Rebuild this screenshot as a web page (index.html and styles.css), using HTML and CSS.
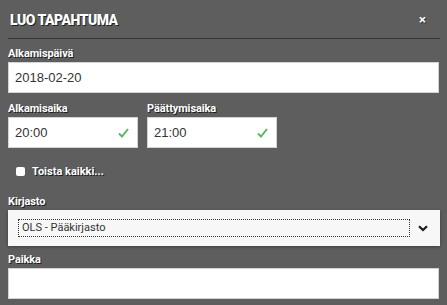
FILE: index.html
```html
<!DOCTYPE html>
<html lang="fi">
<head>
<meta charset="utf-8">
<title>Luo tapahtuma</title>
<link rel="stylesheet" href="styles.css">
</head>
<body>
<div class="dialog">
  <header class="dialog-header">
    <h1 class="dialog-title">LUO TAPAHTUMA</h1>
    <span class="close">&#215;</span>
  </header>

  <div class="field field-first">
    <label class="label">Alkamispäivä</label>
    <div class="input"><span class="value">2018-02-20</span></div>
  </div>

  <div class="row">
    <div class="field field-time">
      <label class="label">Alkamisaika</label>
      <div class="input input-time">
        <span class="value">20:00</span>
        <svg class="check" width="11" height="10" viewBox="0 0 11 10"><path d="M1 5.5 L4 8.5 L10 1" fill="none" stroke="#5cb85c" stroke-width="2"/></svg>
      </div>
    </div>
    <div class="field field-time">
      <label class="label">Päättymisaika</label>
      <div class="input input-time">
        <span class="value">21:00</span>
        <svg class="check" width="11" height="10" viewBox="0 0 11 10"><path d="M1 5.5 L4 8.5 L10 1" fill="none" stroke="#5cb85c" stroke-width="2"/></svg>
      </div>
    </div>
  </div>

  <div class="checkbox-row">
    <span class="checkbox"></span>
    <span class="checkbox-label">Toista kaikki...</span>
  </div>

  <div class="field field-select">
    <label class="label">Kirjasto</label>
    <div class="select">
      <span class="select-value">OLS - Pääkirjasto</span>
      <svg class="chevron" width="10" height="7" viewBox="0 0 10 7"><path d="M1 1.2 L5 5 L9 1.2" fill="none" stroke="#1a1a1a" stroke-width="2.2"/></svg>
    </div>
  </div>

  <div class="field field-place">
    <label class="label">Paikka</label>
    <div class="input"></div>
  </div>
</div>
</body>
</html>
```

FILE: styles.css
```css
html, body {
  margin: 0;
  padding: 0;
  background: #5e5e5e;
}

.dialog {
  width: 431px;
  padding: 0 8px;
  font-family: Roboto, "Liberation Sans", sans-serif;
}

.dialog-header {
  height: 38px;
  border-bottom: 1px solid #363636;
  display: flex;
  align-items: center;
  justify-content: space-between;
  padding: 0 0 0 2px;
  box-sizing: content-box;
  margin-right: -1px;
}

.dialog-title {
  margin: 2px 0 0 0;
  font-size: 14px;
  font-weight: 900;
  letter-spacing: -0.5px;
  color: #fff;
  text-shadow: 1px 1px 0 #222;
}

.close {
  color: #fff;
  font-size: 13px;
  font-weight: 700;
  margin-right: 14px;
  margin-top: 1px;
  text-shadow: 1px 1px 0 #333;
}

.label {
  display: block;
  font-size: 11px;
  line-height: 14px;
  font-weight: 700;
  color: #fff;
  text-shadow: 1px 1px 0 #1e1e1e;
  margin-bottom: 1px;
  letter-spacing: -0.1px;
}

.field-first {
  margin-top: 8px;
}

.input {
  height: 29px;
  background: #fff;
  border: 1px solid #d4d4d4;
  display: flex;
  align-items: center;
  padding: 0 6px;
}

.value {
  font-family: "Liberation Sans", Arial, sans-serif;
  font-size: 13px;
  color: #333;
  flex: 1;
}

.row {
  display: flex;
  gap: 9px;
  margin-top: 9px;
}

.field-time {
  width: 130px;
}

.check {
  margin-right: 2px;
  margin-top: 1px;
}

.checkbox-row {
  display: flex;
  align-items: center;
  margin-top: 16px;
  padding-left: 8px;
  height: 14px;
}

.checkbox {
  width: 9px;
  height: 9px;
  background: #fff;
  border-radius: 2px;
  margin-right: 7px;
}

.checkbox-label {
  font-size: 11px;
  font-weight: 700;
  color: #fff;
  text-shadow: 1px 1px 0 #1e1e1e;
}

.field-select {
  margin-top: 17px;
}

.select {
  height: 36px;
  background: #f7f7f7;
  box-shadow: 0 1px 3px rgba(0, 0, 0, 0.35);
  display: flex;
  align-items: center;
  padding: 0 12px 0 10px;
  margin-right: -1px;
}

.select-value {
  flex: 1;
  height: 16px;
  border: 1px dotted #333;
  font-size: 11px;
  line-height: 16px;
  color: #333;
  padding-left: 3px;
  margin-right: 8px;
}

.field-place {
  margin-top: 7px;
}
```
